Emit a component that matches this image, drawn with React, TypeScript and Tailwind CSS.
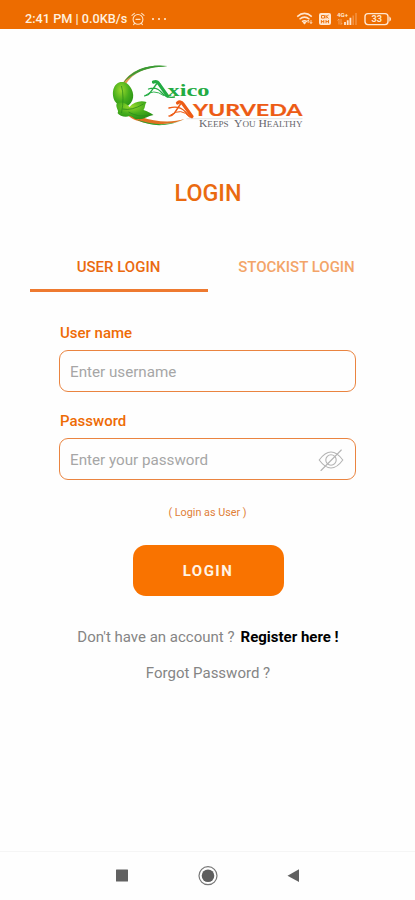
import React from 'react';

function Alarm() {
  return (
    <svg width="14" height="14" viewBox="0 0 14 14" fill="none" stroke="#ffe3c4" strokeWidth="1.1" strokeLinecap="round">
      <circle cx="7" cy="7.4" r="4.9" />
      <path d="M1 3.3 3.4 1.3M13 3.3 10.6 1.3M5 7.4h4M3.6 11.4l-1 1.2M10.4 11.4l1 1.2" />
    </svg>
  );
}

function StatusIcons() {
  return (
    <svg width="98" height="16" viewBox="0 0 98 16" fill="none" stroke="#ffe6cf">
      <path d="M1.2 5.6Q8.5-.8 15.8 5.6M3.5 8.2Q8.5 4 13.5 8.2M6 10.6Q8.5 8.7 11 10.6" strokeWidth="1.5" />
      <path d="M8.5 13.5 6.6 11.4Q8.5 10 10.4 11.4Z" fill="#ffe6cf" stroke="none" />
      <path d="M12.2 12V9M15 9v3.5M11 10.6l1.2-1.6 1.2 1.6M13.8 11l1.2 1.6 1.2-1.6" strokeWidth=".8" />
      <rect x="23" y="2" width="12" height="12" rx="2" fill="#ffe6cf" stroke="none" />
      <path d="M25.5 4.5h3v2.6h-3zM30 4v3.4M32.6 4 30.4 5.7l2.2 1.7M25.4 9v3.3M25.4 10.6h2.4M27.8 9v3.3M30 9v3.3M32.5 9v3.3M30 10.6h2.5" stroke="#ed6c00" strokeWidth=".9" />
      <text x="41" y="6.2" fill="#ffe6cf" stroke="none" fontFamily="Roboto, sans-serif" fontWeight="700" fontSize="6" textLength="11" lengthAdjust="spacingAndGlyphs">4G+</text>
      <path d="M43 8v5.5M41.5 9.5 43 8M45 8v5.5M46.3 12 45 13.5" strokeWidth=".7" opacity=".6" />
      <path d="M49 11v3M51.7 9.3V14M54.4 6.8V14" strokeWidth="1.8" />
      <path d="M57.2 4.4V14M60 2V14" strokeWidth="1.6" opacity=".3" />
      <rect x="69" y="2.6" width="23" height="11" rx="3" strokeWidth="1.4" />
      <path d="M93.3 5.2Q97 8 93.3 10.8Z" fill="#ffe6cf" stroke="none" />
      <text x="75.5" y="11.2" fill="#ffe6cf" stroke="none" fontFamily="Roboto, sans-serif" fontWeight="700" fontSize="8.5" textLength="10.5" lengthAdjust="spacingAndGlyphs">33</text>
    </svg>
  );
}

function Logo() {
  return (
    <svg width="210" height="85" viewBox="0 0 210 85">
      <defs>
        <linearGradient id="ring" x1="0" y1="0" x2="0" y2="1">
          <stop offset="0" stopColor="#2f9a2c" />
          <stop offset=".25" stopColor="#e39a50" />
          <stop offset=".6" stopColor="#d9782c" />
          <stop offset="1" stopColor="#e06f20" />
        </linearGradient>
        <radialGradient id="leaf" cx=".4" cy=".3" r=".8">
          <stop offset="0" stopColor="#9ada2c" />
          <stop offset=".5" stopColor="#46ad1c" />
          <stop offset="1" stopColor="#1f8a14" />
        </radialGradient>
      </defs>
      <path d="M67 11.5C45 8 25 17 19 35C17 50 24 62 38 66C53 71 72 70 84 64C72 68 54 67 41 62C28 57 21 48 22 37C27 20 42 12 67 11.5Z" fill="url(#ring)" />
      <path d="M67 11C49 8.5 30 15 22 29C32 17 47 11.5 67 11Z" fill="#3a9a34" />
      <path d="M35 64Q57 76 84 64.5Q61 74 35 64Z" fill="#2f9e2c" />
      <path d="M20 27C11 29 11 42 15 47C17 50 20 51 22 54C32 50 35 42 31 34C28 28 24 26.5 20 27Z" fill="url(#leaf)" />
      <path d="M16 49C20 46 26 48 29 52C33 47 40 45 46 47C44 50 45 52 43 55C47 56 50 58 53 60C47 61 43 65 37 64C34 65 32 61 29 61C25 63 19 61 17 58C19 56 15 53 16 49Z" fill="url(#leaf)" />
      <path d="M21 31Q24 42 21 58M22 54Q31 56 43 49M28 57Q38 63 49 60" fill="none" stroke="#2d8a1a" strokeWidth=".8" />

      <g fill="none" stroke="#22ab42" strokeLinecap="round">
        <path d="M53 27Q56.5 25.5 58.5 29L67 41" strokeWidth="3.2" />
        <path d="M56 29 50 37Q47.5 41 44.5 40.5M48 34Q56 31 61 37.5Q66 43.5 74 42" strokeWidth="1.3" />
        <path d="M44 41Q53 33 63 40.5" strokeWidth=".9" />
      </g>
      <text x="67" y="41" textLength="42" lengthAdjust="spacingAndGlyphs" fontFamily="Liberation Serif, serif" fontWeight="700" fontSize="17" fill="#22ab42">xico</text>
      <g fill="none" stroke="#ed5b14" strokeLinecap="round">
        <path d="M77 48Q80 45.5 82.5 49L91.5 61.5" strokeWidth="3.2" />
        <path d="M80 49 74 58Q71 61.5 68.5 61M68.5 53Q79 50 85 57Q88 61 91.5 63" strokeWidth="1.4" />
        <path d="M70 60Q81 52 89 62" strokeWidth="1" />
      </g>
      <text x="92.5" y="61.3" textLength="109.5" lengthAdjust="spacingAndGlyphs" fontFamily="Lato, sans-serif" fontWeight="700" fontSize="17.5" fill="#ed5b14" stroke="#ed5b14" strokeWidth=".2">YURVEDA</text>
      <path d="M86 63.7H202" stroke="#d8d8d8" strokeWidth=".7" />
      <text x="98.5" y="72" textLength="103.5" lengthAdjust="spacingAndGlyphs" fontFamily="Liberation Serif, serif" fontSize="9.5" fill="#66666c">
        K<tspan fontSize="7.5">EEPS</tspan>{'\u00a0 '}Y<tspan fontSize="7.5">OU</tspan> H<tspan fontSize="7.5">EALTHY</tspan>
      </text>
    </svg>
  );
}

function EyeOff() {
  return (
    <svg width="26" height="24" viewBox="0 0 26 24" fill="none" stroke="#b4b4b4" strokeWidth="1.1" strokeLinecap="round">
      <path d="M1.2 11Q13-5 24.8 11Q13 27 1.2 11Z" />
      <circle cx="13" cy="11" r="5.2" />
      <path d="M3 21.5 23.3 1" />
    </svg>
  );
}

export default function App() {
  return (
    <div className="flex h-[900px] w-[415px] flex-col overflow-hidden bg-[#fefefe] font-['Roboto',sans-serif]">
      <header className="flex h-[29px] shrink-0 items-end justify-between bg-[#ed6c00] pr-[21px] pb-[2px] pl-[25px] text-[#fff0df]">
        <div className="flex h-4 items-center text-[12.7px] font-medium">
          <span className="w-[103px] whitespace-nowrap">2:41 PM | 0.0KB/s</span>
          <span className="ml-[3px]"><Alarm /></span>
          <span className="ml-[7px] flex gap-[4px]">
            <i className="size-[2px] rounded-full bg-[#fff0df]" />
            <i className="size-[2px] rounded-full bg-[#fff0df]" />
            <i className="size-[2px] rounded-full bg-[#fff0df]" />
          </span>
        </div>
        <StatusIcons />
      </header>

      <main className="flex flex-1 flex-col items-center">
        <div className="mt-[26px] h-[85px] w-[210px] -translate-x-[2.5px]">
          <Logo />
        </div>
        <h1 className="mt-[37px] h-8 pl-px text-[23.3px] leading-8 font-medium text-[#ea6a10]">LOGIN</h1>

        <div className="mt-[42px] grid w-[356px] grid-cols-2 text-center text-[15px] font-medium">
          <div className="h-[41px] border-b-[3px] border-[#ee7a30] pt-[6px] leading-5 text-[#ea6a10]">USER LOGIN</div>
          <div className="pt-[6px] leading-5 text-[#f3a468]">STOCKIST LOGIN</div>
        </div>

        <form className="mt-[31px] w-[297px]">
          <label className="block h-[27px] pl-px text-[15px] leading-5 font-medium text-[#ee6b05]">User name</label>
          <div className="flex h-[42px] items-center rounded-[9px] border border-[#ea8440] pt-[3px] pl-[10px] text-[15.2px] text-[#a6a6a6]">Enter username</div>
          <label className="mt-[19px] block h-[27px] pl-px text-[15px] leading-5 font-medium text-[#ee6b05]">Password</label>
          <div className="flex h-[42px] items-center justify-between rounded-[9px] border border-[#ea8440] pt-[3px] pr-[11px] pl-[10px] text-[15.2px] text-[#a6a6a6]">
            <span>Enter your password</span>
            <EyeOff />
          </div>
        </form>

        <p className="mt-[25px] h-4 text-[10.8px] leading-4 text-[#e08037]">( Login as User )</p>
        <button className="mt-[24px] ml-px h-[51px] w-[151px] rounded-[13px] bg-[#f97300] pt-[2px] text-[15px] font-bold tracking-[1.5px] text-[#fff4e6]">LOGIN</button>

        <p className="mt-[31px] flex h-5 items-center gap-[6px] pl-px text-[15px] text-[#858585]">
          <span>Don't have an account ?</span>
          <span className="font-bold text-black">Register here !</span>
        </p>
        <p className="mt-[16px] h-5 pl-px text-[15px] leading-5 text-[#858585]">Forgot Password ?</p>
      </main>

      <nav className="flex h-[49px] shrink-0 items-center justify-center gap-[68px] border-t border-[#f5f5f5] bg-[#fefefe]">
        <svg width="16" height="20" viewBox="0 0 16 20"><rect x="2" y="3.5" width="12" height="12" rx=".5" fill="#616161" /></svg>
        <svg width="20" height="20" viewBox="0 0 20 20"><circle cx="10" cy="9.7" r="9" fill="none" stroke="#777" strokeWidth="1.2" /><circle cx="10" cy="9.7" r="6.3" fill="#5e5e5e" /></svg>
        <svg width="16" height="20" viewBox="0 0 16 20"><path d="M1.5 9.7 13 3.3v12.8Z" fill="#616161" /></svg>
      </nav>
    </div>
  );
}
